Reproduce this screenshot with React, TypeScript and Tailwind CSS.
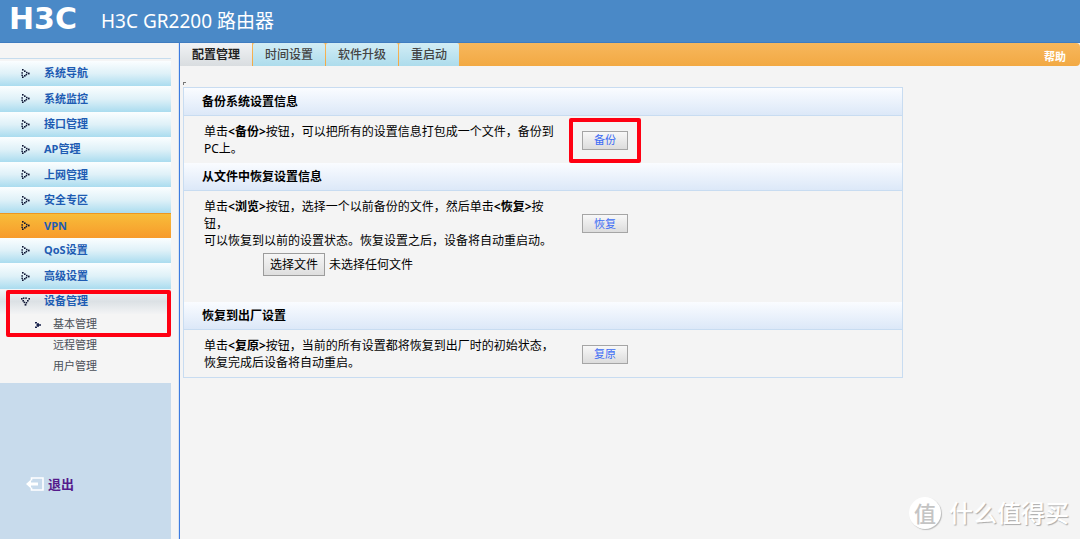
import { useRef, useState } from "react";
import type { ReactNode } from "react";

const menus = ["系统导航", "系统监控", "接口管理", "AP管理", "上网管理", "安全专区", "VPN", "QoS设置", "高级设置", "设备管理"];
const subMenus = ["基本管理", "远程管理", "用户管理"];
const tabs = ["配置管理", "时间设置", "软件升级", "重启动"];

const ArrowDots = ({ open }: { open: boolean }) => (
  <svg
    width="9"
    height="9"
    viewBox="0 0 9 9"
    fill="#0d1433"
    className={open ? "rotate-90" : ""}
    aria-hidden="true"
  >
    <rect x="1" y="0" width="1.6" height="1.6" />
    <rect x="3" y="1.4" width="1.6" height="1.6" />
    <rect x="0.4" y="3.2" width="1.5" height="1.5" />
    <rect x="5" y="2.800" width="1.500" height="1.500" />
    <rect x="6.8" y="3.6" width="1.8" height="1.8" />
    <rect x="4.600" y="4.900" width="1.500" height="1.500" />
    <rect x="0.4" y="5.600" width="1.500" height="1.500" />
    <rect x="3" y="6" width="1.6" height="1.6" />
    <rect x="1" y="7.4" width="1.6" height="1.6" />
  </svg>
);

const ActionButton = ({ children }: { children: ReactNode }) => (
  <button className="h-[19px] w-[46px] border border-[#a5a5a5] bg-linear-to-b from-[#f8f8f8] to-[#dcdcdc] text-[11px] leading-4 text-[#3c6cf5] cursor-pointer">
    {children}
  </button>
);

type SectionProps = {
  title: string;
  action: string;
  marked?: boolean;
  text: ReactNode;
  children?: ReactNode;
};

const Section = ({ title, action, marked, text, children }: SectionProps) => (
  <section>
    <h2 className="flex h-7 items-center border-b border-[#c8dcf1] bg-linear-to-b from-[#fafcff] to-[#dce8f8] pl-[18px] text-[12px] font-bold">
      {title}
    </h2>
    <div className="pt-[7px] pb-[6px]">
      <div className="flex items-center pl-5">
        <p className="w-[378px] shrink-0 leading-[17px]">{text}</p>
        <div className="relative flex">
          <ActionButton>{action}</ActionButton>
          {marked && (
            <span className="pointer-events-none absolute -inset-[13px] rounded-xs border-4 border-[#ff0012]" />
          )}
        </div>
      </div>
      {children}
    </div>
  </section>
);

const FilePicker = () => {
  const input = useRef<HTMLInputElement>(null);
  const [fileName, setFileName] = useState("");

  return (
    <div className="mt-1 mb-5 flex items-center gap-1 pl-[79px]">
      <input
        ref={input}
        type="file"
        aria-label="选择文件"
        className="hidden"
        onChange={(e) => setFileName(e.target.files?.[0]?.name ?? "")}
      />
      <button
        onClick={() => input.current?.click()}
        className="h-[23px] w-[62px] border border-[#9c9c9c] bg-linear-to-b from-[#f6f6f6] to-[#dedede] cursor-pointer"
      >
        选择文件
      </button>
      <span>{fileName || "未选择任何文件"}</span>
    </div>
  );
};

const Sidebar = () => (
  <aside className="flex w-[179px] shrink-0 flex-col border-r border-[#d9e4f2] bg-[#f5f5f5] pr-[7px]">
    <nav className="pt-[15px] pb-[6px]">
      <ul className="grid h-[256px] grid-rows-10 border-t border-[#c6dcee] pt-[2px]">
        {menus.map((name) => (
          <li key={name}>
            <a
              href="#"
              className={`flex h-full items-center pl-[21px] gap-[14px] font-bold text-[11px] text-[#1e5cb3] ${
                name === "VPN"
                  ? "border-t border-[#ee961f] bg-linear-to-b from-[#f7bd3a] to-[#f79a2b]"
                  : name === "设备管理"
                    ? "bg-linear-to-b from-[#f3f5f7] via-[#dce1e5] via-50% to-[#f3f4f5]"
                    : "bg-linear-to-b from-[#fbfeff] via-[#dff1f8] via-50% to-[#aadcef]"
              }`}
            >
              <ArrowDots open={name === "设备管理"} />
              {name}
            </a>
          </li>
        ))}
      </ul>
      <ul>
        {subMenus.map((name, i) => (
          <li key={name} className="h-[21px]">
            <a href="#" className="flex h-full items-center gap-3 pl-[35px] text-[11px] text-[#4a5058]">
              <svg width="6" height="6" viewBox="0 0 6 6" fill="#16204a" className={i === 0 ? "" : "invisible"} aria-hidden="true">
                <path d="M0 0h2v1.300h2v1h2v1.400H4v1H2V6H0V4.400h2V3.600H1V2.400h1V1.600H0z" />
              </svg>
              {name}
            </a>
          </li>
        ))}
      </ul>
    </nav>
    <div className="flex-1 bg-[#c8dbec] pt-[91px] pl-[26px]">
      <a href="#" className="flex items-center gap-1 text-[13px] font-bold leading-5 text-[#551a8b]">
        <svg width="18" height="14" viewBox="0 0 18 14" fill="none" stroke="#fff" strokeWidth="1.6" aria-hidden="true">
          <path d="M5.500 3.500V1h11.500v12H5.500v-2.500" />
          <path d="M4 7h8" strokeWidth="3" />
          <path d="M0 7l5-4.500v9z" fill="#fff" stroke="none" />
        </svg>
        退出
      </a>
    </div>
  </aside>
);

const App = () => {
  const [tab, setTab] = useState(tabs[0]);

  return (
    <div className="relative flex min-h-screen flex-col bg-[#f4f4f4] font-['Noto_Sans','Noto_Sans_CJK_SC',sans-serif] text-[12px] text-black">
      <header className="flex h-[43px] items-center gap-6 border-b border-[#3f7cc0] bg-[#4a89c7] pl-[9px] text-white">
        <span className="pb-[5px] font-['DejaVu_Sans',sans-serif] text-[30px] leading-8 font-bold">H3C</span>
        <h1 className="text-[19px] leading-6">H3C GR2200 路由器</h1>
      </header>

      <div className="flex flex-1">
        <div className="relative flex">
          <Sidebar />
          <span className="pointer-events-none absolute top-[247px] right-2 left-[6px] h-[47px] rounded-xs border-4 border-[#ff0012]" />
        </div>

        <main className="min-w-0 flex-1 border-l border-[#3d7be0]">
          <div className="flex h-[23px] items-stretch justify-between rounded-r-sm bg-linear-to-b from-[#f7b75c] to-[#f2a943]">
            <div role="tablist" className="flex gap-px">
              {tabs.map((name) => (
                <button
                  key={name}
                  role="tab"
                  aria-selected={tab === name}
                  onClick={() => setTab(name)}
                  className={`px-3 cursor-pointer ${
                    tab === name
                      ? "bg-linear-to-b from-[#f1f3f5] to-[#d9dde0] font-bold text-[#222]"
                      : "rounded-t-xs bg-linear-to-b from-[#d2edf5] to-[#addcec] font-medium text-[#444]"
                  }`}
                >
                  {name}
                </button>
              ))}
            </div>
            <a href="#" className="self-end pr-[14px] text-[11px] leading-[18px] font-bold text-white">
              帮助
            </a>
          </div>

          <div className="flex h-[21px] items-end pb-[2px] pl-[3px]">
            <span className="size-[3px] border-t border-l border-[#777]" />
          </div>
          <div className="ml-[3px] w-4/5 border border-[#c8dcf1]">
            <Section
              title="备份系统设置信息"
              action="备份"
              marked
              text={
                <>
                  单击<b>&lt;备份&gt;</b>按钮，可以把所有的设置信息打包成一个文件，备份到
                  <br />
                  PC上。
                </>
              }
            />
            <Section
              title="从文件中恢复设置信息"
              action="恢复"
              text={
                <>
                  单击<b>&lt;浏览&gt;</b>按钮，选择一个以前备份的文件，然后单击<b>&lt;恢复&gt;</b>按
                  <br />
                  钮，
                  <br />
                  可以恢复到以前的设置状态。恢复设置之后，设备将自动重启动。
                </>
              }
            >
              <FilePicker />
            </Section>
            <Section
              title="恢复到出厂设置"
              action="复原"
              text={
                <>
                  单击<b>&lt;复原&gt;</b>按钮，当前的所有设置都将恢复到出厂时的初始状态，
                  <br />
                  恢复完成后设备将自动重启。
                </>
              }
            />
          </div>
        </main>
      </div>

      <div className="pointer-events-none absolute right-[11px] bottom-[10px] flex items-center gap-2 text-white">
        <span className="flex size-8 items-center justify-center rounded-full bg-white text-[22px] leading-8 font-medium text-[#c4c4c4] shadow-[1px_1px_1px_#bbb]">
          值
        </span>
        <span className="text-[24px] leading-8 font-medium [text-shadow:1px_1px_1px_#aaa]">什么值得买</span>
      </div>
    </div>
  );
};

export default App;
